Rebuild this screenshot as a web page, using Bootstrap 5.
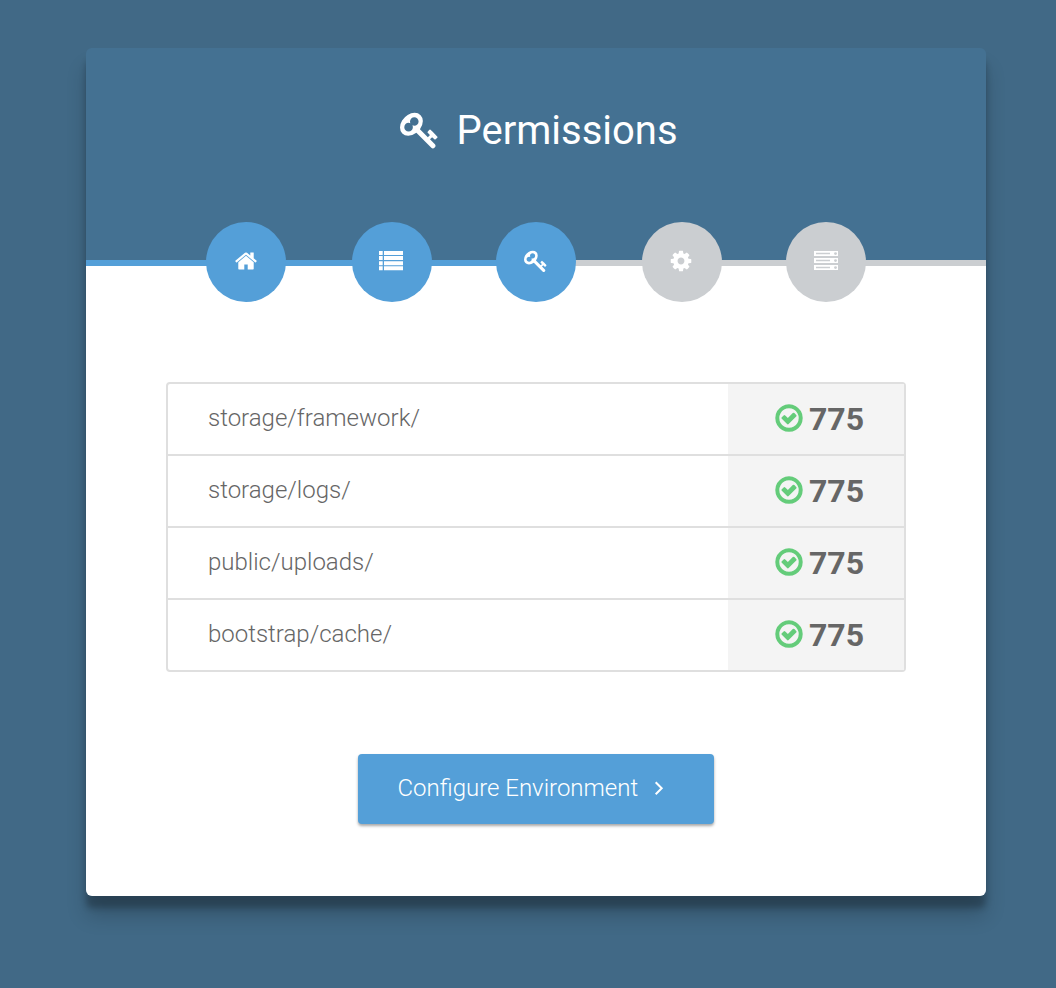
<!DOCTYPE html>
<html lang="en">
<head>
<meta charset="utf-8">
<meta name="viewport" content="width=device-width, initial-scale=1">
<title>Permissions</title>
<link href="https://cdn.jsdelivr.net/npm/bootstrap@5.3.0/dist/css/bootstrap.min.css" rel="stylesheet">
<style>
body{font-family:Roboto,"Liberation Sans",sans-serif;font-weight:300;background:#416986;color:#666;min-height:988px;padding:48px 70px 92px 86px}
svg{fill:currentColor;display:block;flex:none}
.installer{width:900px;height:848px;border-radius:6px;background:linear-gradient(#447192 212px,#fff 212px);box-shadow:0 20px 20px rgba(0,0,0,.19),0 12px 6px rgba(0,0,0,.23)}
.installer-head{height:212px;padding:53px 0 0 6px}
.installer-head h1{font-size:40px;line-height:60px;font-weight:400}
.head-key{margin:0 16px 2px 0}
.steps{height:80px;margin-top:-38px;background:linear-gradient(90deg,#549fd8 50%,#cbced1 50%) 0 38px/100% 6px no-repeat;padding:0 120px}
.step-dot{width:80px;height:80px;border-radius:50%;background:#cbced1;padding-bottom:2px}
.step-dot.done{background:#549fd8}
.step-dot:nth-child(even){margin-right:-1px;margin-left:1px}
.step-dot:nth-child(even) svg{margin-left:-2px}
.checks{margin:80px 80px 0;border:2px solid #dfdfdf;border-radius:4px}
.check-row{height:72px;font-size:24px;border-bottom:2px solid #dfdfdf}
.check-row:last-child{height:70px;border-bottom:0}
.check-path{padding:0 0 2px 40px}
.check-mode{width:176px;background:#f4f4f4;font-size:32px;font-weight:700;padding:0 40px 1px 0;gap:4px}
.check-mode svg{color:#64cc7a;margin-bottom:1px}
.btn-next{--bs-btn-color:#fff;--bs-btn-bg:#549fd8;--bs-btn-hover-bg:#3d92d1;--bs-btn-hover-color:#fff;width:356px;height:70px;margin-top:82px;border:0;border-radius:4px;font-size:24px;font-weight:300;padding:0 0 2px 39.5px;box-shadow:0 2px 3px rgba(0,0,0,.35)}
</style>
</head>
<body>
<svg class="d-none">
<symbol id="key" viewBox="0 0 1792 1792"><path d="M832 512q0-80-56-136t-136-56-136 56-56 136q0 42 19 83-41-19-83-19-80 0-136 56t-56 136 56 136 136 56 136-56 56-136q0-42-19-83 41 19 83 19 80 0 136-56t56-136zm851 704q0 17-49 66t-66 49q-9 0-28.5-16t-36.5-33-38.5-40-24.5-26l-96 96 220 220q28 28 28 68 0 42-39 81t-81 39q-40 0-68-28l-671-671q-176 131-365 131-163 0-265.5-102.5t-102.5-265.5q0-160 95-313t248-248 313-95q163 0 265.5 102.5t102.5 265.5q0 189-131 365l355 355 96-96q-3-3-26-24.5t-40-38.5-33-36.5-16-28.5q0-17 49-66t66-49q13 0 23 10 6 6 46 44.5t82 79.5 86.5 86 73 78 28.5 41z"/></symbol>
<symbol id="check" viewBox="0 0 1792 1792"><path d="M1299 813l-422 422q-19 19-45 19t-45-19l-294-294q-19-19-19-45t19-45l102-102q19-19 45-19t45 19l147 147 275-275q19-19 45-19t45 19l102 102q19 19 19 45t-19 45zm141 83q0-148-73-273t-198-198-273-73-273 73-198 198-73 273 73 273 198 198 273 73 273-73 198-198 73-273zm224 0q0 209-103 385.5t-279.5 279.5-385.5 103-385.5-103-279.5-279.5-103-385.5 103-385.5 279.5-279.5 385.5-103 385.5 103 279.5 279.5 103 385.5z"/></symbol>
</svg>
<main class="installer">
  <header class="installer-head">
    <h1 class="d-flex justify-content-center align-items-center text-white m-0"><svg class="head-key" width="40" height="40"><use href="#key"/></svg>Permissions</h1>
  </header>
  <nav class="steps d-flex justify-content-between text-white">
    <span class="step-dot done d-flex align-items-center justify-content-center"><svg width="24" height="24" viewBox="0 0 1792 1792"><path d="M1472 992v480q0 26-19 45t-45 19h-384v-384h-256v384h-384q-26 0-45-19t-19-45v-480q0-1 .5-3t.5-3l575-474 575 474q1 2 1 6zm223-69l-62 74q-8 9-21 11h-3q-13 0-21-7l-692-577-692 577q-12 8-24 7-13-2-21-11l-62-74q-8-10-7-23.5t11-21.5l719-599q32-26 76-26t76 26l244 204v-195q0-14 9-23t23-9h192q14 0 23 9t9 23v408l219 182q10 8 11 21.5t-7 23.5z"/></svg></span>
    <span class="step-dot done d-flex align-items-center justify-content-center"><svg width="24" height="20" viewBox="0 0 24 20"><path d="M0 0h3.7v4H0zM5 0h19v4H5zM0 5.1h3.7v4H0zM5 5.1h19v4H5zM0 10.2h3.7v4H0zM5 10.2h19v4H5zM0 15.3h3.7v4H0zM5 15.3h19v4H5z"/></svg></span>
    <span class="step-dot done d-flex align-items-center justify-content-center"><svg width="24" height="24"><use href="#key"/></svg></span>
    <span class="step-dot d-flex align-items-center justify-content-center"><svg width="24" height="24" viewBox="0 0 1792 1792"><path d="M1152 896q0-106-75-181t-181-75-181 75-75 181 75 181 181 75 181-75 75-181zm512-109v222q0 12-8 23t-20 13l-185 28q-19 54-39 91 35 50 107 138 10 12 10 25t-9 23q-27 37-99 108t-94 71q-12 0-26-9l-138-108q-44 23-91 38-16 136-29 186-7 28-36 28h-222q-14 0-24.5-8.5t-11.5-21.5l-28-184q-49-16-90-37l-141 107q-10 9-25 9-14 0-25-11-126-114-165-168-7-10-7-23 0-12 8-23 15-21 51-66.5t54-70.5q-27-50-41-99l-183-27q-13-2-21-12.5t-8-23.5v-222q0-12 8-23t19-13l186-28q14-46 39-92-40-57-107-138-10-12-10-24 0-10 9-23 26-36 98.5-107.5t94.5-71.5q13 0 26 10l138 107q44-23 91-38 16-136 29-186 7-28 36-28h222q14 0 24.5 8.5t11.5 21.5l28 184q49 16 90 37l142-107q9-9 24-9 13 0 25 10 129 119 165 170 7 8 7 22 0 12-8 23-15 21-51 66.5t-54 70.5q26 50 41 98l183 28q13 2 21 12.5t8 23.5z"/></svg></span>
    <span class="step-dot d-flex align-items-center justify-content-center"><svg width="24" height="20" viewBox="0 0 24 20"><path d="M0 0h24v5H0zM0 7h24v5H0zM0 14h24v5H0z"/><path fill="none" stroke="#cbced1" stroke-width="1.5" d="M2 2.6h14M2 9.6h14M2 16.6h14"/><g fill="#cbced1"><circle cx="21.5" cy="2.6" r="1.4"/><circle cx="21.5" cy="9.6" r="1.4"/><circle cx="21.5" cy="16.6" r="1.4"/></g></svg></span>
  </nav>
  <section class="checks">
    <div class="check-row d-flex"><div class="check-path flex-grow-1 d-flex align-items-center">storage/framework/</div><div class="check-mode d-flex align-items-center justify-content-end"><svg width="32" height="32"><use href="#check"/></svg>775</div></div>
    <div class="check-row d-flex"><div class="check-path flex-grow-1 d-flex align-items-center">storage/logs/</div><div class="check-mode d-flex align-items-center justify-content-end"><svg width="32" height="32"><use href="#check"/></svg>775</div></div>
    <div class="check-row d-flex"><div class="check-path flex-grow-1 d-flex align-items-center">public/uploads/</div><div class="check-mode d-flex align-items-center justify-content-end"><svg width="32" height="32"><use href="#check"/></svg>775</div></div>
    <div class="check-row d-flex"><div class="check-path flex-grow-1 d-flex align-items-center">bootstrap/cache/</div><div class="check-mode d-flex align-items-center justify-content-end"><svg width="32" height="32"><use href="#check"/></svg>775</div></div>
  </section>
  <a href="#" class="btn btn-next d-flex align-items-center mx-auto">Configure Environment<svg width="11" height="16" viewBox="0 0 11 16" class="ms-3"><path d="M1.7 2.2l6 6-6 6" fill="none" stroke="#fff" stroke-width="2"/></svg></a>
</main>
<script src="https://cdn.jsdelivr.net/npm/bootstrap@5.3.0/dist/js/bootstrap.bundle.min.js"></script>
</body>
</html>
